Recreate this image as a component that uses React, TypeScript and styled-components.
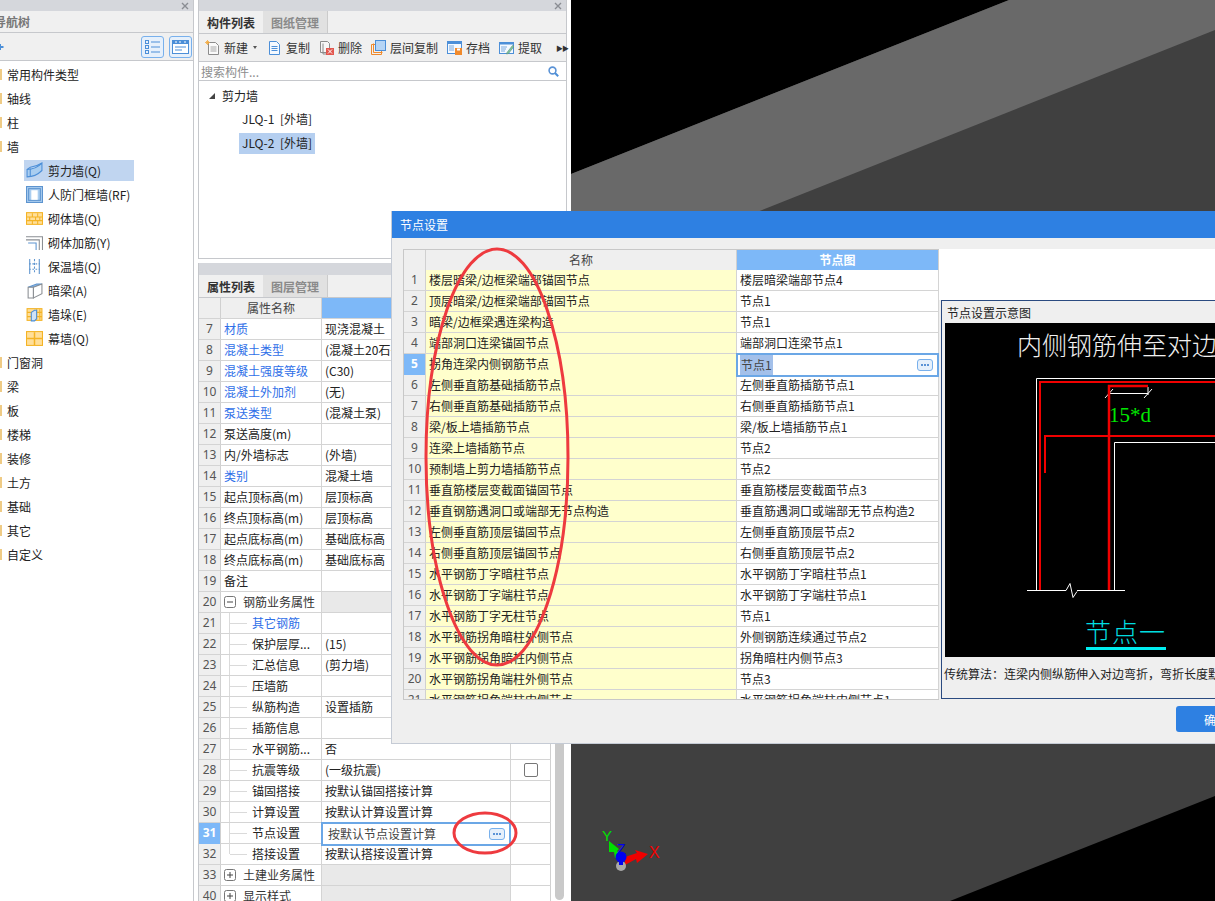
import React from "react";
import styled, { createGlobalStyle } from "styled-components";

const CJK = `"Noto Sans CJK SC", "Noto Sans", sans-serif`;

const GlobalStyle = createGlobalStyle`
  html, body { margin: 0; padding: 0; background: #fff; }
  body { font-family: ${CJK}; font-size: 12px; color: #222; }
  * { box-sizing: border-box; }
`;

const Page = styled.div`
  position: relative;
  display: flex;
  width: 1215px;
  height: 901px;
  overflow: hidden;
  background: #fff;
`;

/* ---------- shared panel parts ---------- */
const TitleStrip = styled.div<{ $h: number }>`
  height: ${(p) => p.$h}px;
  flex: none;
  background: #d5d7dc;
  display: flex;
  align-items: center;
  justify-content: flex-end;
  padding-right: 4px;
`;
const CloseGlyph = () => (
  <svg width="8" height="8" viewBox="0 0 8 8">
    <path d="M1 1l6 6M7 1L1 7" stroke="#8a8d93" strokeWidth="1.4" />
  </svg>
);
const TabStrip = styled.div<{ $h: number }>`
  height: ${(p) => p.$h}px;
  flex: none;
  display: flex;
  background: #f0f0f0;
  border-bottom: 1px solid #c6c8cc;
`;
const Tab = styled.div<{ $active?: boolean }>`
  width: ${(p) => (p.$active ? 64 : 65)}px;
  display: flex;
  align-items: center;
  justify-content: center;
  font-weight: 700;
  color: ${(p) => (p.$active ? "#333" : "#8a8a8a")};
  background: ${(p) => (p.$active ? "#f0f0f0" : "#e1e1e1")};
  border-right: ${(p) => (p.$active ? "none" : "1px solid #cbcbcb")};
`;

/* ---------- left panel ---------- */
const LeftPanel = styled.aside`
  width: 194px;
  flex: none;
  display: flex;
  flex-direction: column;
  border-right: 1px solid #c6c8cc;
`;
const LeftTitle = styled.div`
  height: 22px;
  flex: none;
  display: flex;
  align-items: center;
  background: #f0f0f0;
  border-bottom: 1px solid #c6c8cc;
  color: #777;
  font-weight: 700;
`;
const ClippedLabel = styled.span`
  margin-left: -6px;
`;
const LeftToolbar = styled.div`
  height: 28px;
  flex: none;
  display: flex;
  align-items: center;
  justify-content: space-between;
  padding-right: 1px;
  background: #f0f0f0;
  border-bottom: 1px solid #c6c8cc;
`;
const ViewButtons = styled.div`
  display: flex;
  gap: 5px;
`;
const ViewButton = styled.div`
  width: 23px;
  height: 22px;
  display: flex;
  align-items: center;
  justify-content: center;
  border: 1px solid #78b0ec;
  border-radius: 3px;
  background: #e6f0fb;
`;
const Tree = styled.div`
  padding-top: 1px;
  display: flex;
  flex-direction: column;
`;
const TreeRow = styled.div`
  height: 24px;
  display: flex;
  align-items: center;
  color: #222;
`;
const FolderStub = styled.span`
  width: 2px;
  height: 11px;
  margin-right: 5px;
  background: #efcb85;
`;
const TreeChild = styled.div`
  height: 24px;
  display: flex;
  align-items: center;
  padding-left: 24px;
`;
const ChildInner = styled.div<{ $selected?: boolean }>`
  width: 110px;
  height: 21px;
  padding-left: 2px;
  display: flex;
  align-items: center;
  gap: 5px;
  white-space: nowrap;
  background: ${(p) => (p.$selected ? "#c0d5f0" : "transparent")};
`;

/* ---------- centre column ---------- */
const Centre = styled.div`
  width: 369px;
  flex: none;
  margin: 0 4px;
  display: flex;
  flex-direction: column;
  gap: 4px;
`;
const TopPanel = styled.section`
  height: 259px;
  flex: none;
  display: flex;
  flex-direction: column;
  border: 1px solid #c6c8cc;
  border-top: none;
`;
const Toolbar = styled.div`
  height: 28px;
  flex: none;
  display: flex;
  align-items: center;
  padding-left: 6px;
  gap: 9px;
  background: #f0f0f0;
  border-bottom: 1px solid #c6c8cc;
`;
const ToolItem = styled.div`
  display: flex;
  align-items: center;
  gap: 4px;
  white-space: nowrap;
  color: #333;
`;
const Caret = styled.span`
  width: 0;
  height: 0;
  margin: 0 1px;
  border-left: 2.5px solid transparent;
  border-right: 2.5px solid transparent;
  border-top: 3px solid #555;
`;
const MoreGlyph = styled.span`
  margin-left: 5px;
  font-size: 7px;
  letter-spacing: -1px;
  color: #333;
`;
const SearchBar = styled.div`
  height: 19px;
  flex: none;
  display: flex;
  align-items: center;
  justify-content: space-between;
  padding: 0 7px 0 2px;
  color: #8d8d8d;
  border-bottom: 1px solid #c6c8cc;
`;
const ComponentList = styled.div`
  padding-top: 3px;
  display: flex;
  flex-direction: column;
`;
const ComponentHead = styled.div`
  height: 23px;
  display: flex;
  align-items: center;
  padding-left: 10px;
  gap: 7px;
`;
const ComponentRow = styled.div`
  height: 24px;
  padding-left: 40px;
  display: flex;
  align-items: center;
`;
const ComponentLabel = styled.span<{ $selected?: boolean }>`
  height: 21px;
  line-height: 20px;
  padding: 0 3px;
  word-spacing: 3px;
  background: ${(p) => (p.$selected ? "#b5cff0" : "transparent")};
`;

const BottomPanel = styled.section`
  flex: 1;
  min-height: 0;
  display: flex;
  flex-direction: column;
  border-left: 1px solid #c6c8cc;
`;
const PropBody = styled.div`
  flex: 1;
  min-height: 0;
  display: flex;
  overflow: hidden;
`;
const PropTable = styled.div`
  width: 352px;
  flex: none;
  display: flex;
  flex-direction: column;
`;
const PropGridRow = styled.div<{ $h?: number }>`
  flex: none;
  height: ${(p) => p.$h ?? 21}px;
  display: grid;
  grid-template-columns: 22px 101px 189px 40px;
  border-bottom: 1px solid #d4d4d4;
  line-height: 20px;
  white-space: nowrap;
`;
const NumCell = styled.div<{ $active?: boolean }>`
  text-align: center;
  font-family: "Noto Sans", sans-serif;
  font-size: 12px;
  font-weight: ${(p) => (p.$active ? 700 : 400)};
  color: ${(p) => (p.$active ? "#fff" : "#555")};
  background: ${(p) => (p.$active ? "#7db8f8" : "#efefef")};
  border-right: 1px solid #d0d0d0;
`;
const HeadCell = styled.div<{ $blue?: boolean }>`
  text-align: center;
  color: #444;
  background: ${(p) => (p.$blue ? "#7db8f8" : "#efefef")};
  border-right: 1px solid #d0d0d0;
`;
const NameCell = styled.div<{ $blue?: boolean; $sub?: boolean; $last?: boolean }>`
  position: relative;
  padding-left: ${(p) => (p.$sub ? 31 : 3)}px;
  color: ${(p) => (p.$blue ? "#2f6fe8" : "#222")};
  border-right: 1px solid #d4d4d4;
  overflow: hidden;

  ${(p) =>
    p.$sub
      ? `
    &::before {
      content: "";
      position: absolute;
      left: 8px;
      top: 0;
      width: 1px;
      height: ${p.$last ? "10px" : "21px"};
      background: #dadada;
    }
    &::after {
      content: "";
      position: absolute;
      left: 9px;
      top: 10px;
      width: 17px;
      height: 1px;
      background: #dadada;
    }
  `
      : ""}
`;
const GroupName = styled.div`
  display: flex;
  align-items: center;
  gap: 7px;
  padding-left: 3px;
  color: #333;
  border-right: 1px solid #d4d4d4;
`;
const ValueCell = styled.div<{ $group?: boolean }>`
  padding-left: 3px;
  background: ${(p) => (p.$group ? "#e9e9e9" : "#fff")};
  border-right: 1px solid #d4d4d4;
  overflow: hidden;
`;
const EditCell = styled.div<{ $pad: number }>`
  position: relative;
  display: flex;
  align-items: center;
  justify-content: space-between;
  padding: 0 4px 0 ${(p) => p.$pad}px;
  border: 2px solid #6ba7e6;
  margin: -1px 0 -1px -1px;
  background: #fff;
  color: #444;
  z-index: 1;
`;
const DotsButton = styled.span`
  width: 16px;
  height: 12px;
  border: 1px solid #78b0ec;
  border-radius: 3px;
  background: #e6f0fb;
  display: flex;
  align-items: center;
  justify-content: center;
  gap: 1px;
  flex: none;
`;
const Dot = styled.i`
  width: 2px;
  height: 2px;
  background: #5b93d6;
`;
const ExtraCell = styled.div`
  display: flex;
  align-items: center;
  justify-content: center;
  border-right: 1px solid #d0d0d0;
`;
const CheckBox = styled.span`
  width: 14px;
  height: 14px;
  border: 1px solid #777;
  border-radius: 2px;
  background: #fff;
`;
const ScrollTrack = styled.div`
  width: 15px;
  flex: none;
  padding: 10px 2px 1px 4px;
`;
const ScrollThumb = styled.div`
  height: 100%;
  background: #c9c9c9;
  border-radius: 5px;
`;

/* ---------- 3d canvas ---------- */
const CanvasArea = styled.main`
  flex: 1;
  min-width: 0;
  background: #404040;
  display: flex;
`;

/* ---------- dialog ---------- */
const Dialog = styled.div`
  position: absolute;
  left: 391px;
  top: 211px;
  width: 870px;
  height: 533px;
  display: flex;
  flex-direction: column;
  background: #efefef;
  border: 1px solid #c5cbd5;
  border-top: none;
`;
const DialogTitle = styled.div`
  height: 27px;
  flex: none;
  display: flex;
  align-items: center;
  padding-left: 8px;
  background: #2e80e2;
  color: #fff;
`;
const DialogBody = styled.div`
  display: flex;
  height: 450px;
  flex: none;
  margin: 11px 0 0 11px;
`;
const NodeTable = styled.div`
  width: 536px;
  height: 451px;
  flex: none;
  overflow: hidden;
  border-top: 1px solid #c8c8c8;
  border-left: 1px solid #c8c8c8;
  border-bottom: 1px solid #c8c8c8;
  background: #fff;
`;
const NodeRow = styled.div<{ $head?: boolean }>`
  height: ${(p) => (p.$head ? 20 : 21)}px;
  display: grid;
  grid-template-columns: 22px 311px 202px;
  border-bottom: 1px solid #d4d4d4;
  line-height: 20px;
  white-space: nowrap;
`;
const NodeName = styled.div`
  padding-left: 3px;
  background: #ffffcc;
  color: #222;
  border-right: 1px solid #d4d4d4;
`;
const NodeValue = styled.div`
  padding-left: 3px;
  color: #222;
  border-right: 1px solid #d4d4d4;
  overflow: hidden;
`;
const Highlighted = styled.span`
  background: #a3c0ea;
  padding: 0 1px;
`;
const RightColumn = styled.div`
  flex: 1;
  min-width: 0;
  display: flex;
  flex-direction: column;
`;
const WhiteSpacer = styled.div`
  height: 51px;
  flex: none;
  background: #fff;
`;
const SchematicPanel = styled.div`
  flex: 1;
  margin-left: 2px;
  display: flex;
  flex-direction: column;
  border: 1px solid #2a4a80;
  border-right: none;
  background: #efefef;
  overflow: hidden;
  min-height: 0;
`;
const SchematicTitle = styled.div`
  height: 22px;
  flex: none;
  padding-left: 5px;
  line-height: 24px;
  color: #222;
`;
const SchematicView = styled.div`
  height: 334px;
  flex: none;
  margin-left: 3px;
  background: #000;
  overflow: hidden;
`;
const SchematicDrawing = styled.svg`
  display: block;
  width: 400px;
  height: 334px;
`;
const SchematicNote = styled.div`
  padding: 8px 0 0 2px;
  white-space: nowrap;
  color: #222;
`;
const DialogFooter = styled.div`
  flex: 1;
  display: flex;
  justify-content: flex-end;
  align-items: flex-start;
  padding: 7px 4px 0 0;
`;
const PrimaryButton = styled.button`
  width: 80px;
  height: 26px;
  border: none;
  border-radius: 3px;
  background: #2e80e2;
  color: #fff;
  font-family: ${CJK};
  font-size: 12px;
  padding: 0;
`;

const AnnotationLayer = styled.svg<{ $z: number }>`
  position: absolute;
  left: 0;
  top: 0;
  z-index: ${(p) => p.$z};
  pointer-events: none;
`;

/* ---------- icons ---------- */
type IconKind = "shear" | "frame" | "brick" | "rebar" | "insul" | "beam" | "pier" | "curtain";

const TreeIcon = ({ kind }: { kind: IconKind }) => (
  <svg width="17" height="17" viewBox="0 0 16 16" style={{ flex: "none" }}>
    {kind === "shear" && (
      <g>
        <path d="M1 7C6 7 11 5 15 1v7c-4 4-9 6-14 6z" fill="#a9cdf0" stroke="#4c8fd8" />
        <path d="M1 7l3-2c4-.5 8-2 11-4" fill="none" stroke="#4c8fd8" />
        <path d="M4 6v7.5" stroke="#4c8fd8" />
      </g>
    )}
    {kind === "frame" && (
      <g>
        <rect x="0.5" y="0.5" width="15" height="15" fill="#a9cdf0" stroke="#5d94cf" />
        <rect x="2.5" y="2.5" width="11" height="11" fill="#a9cdf0" stroke="#5d94cf" />
        <rect x="5" y="4" width="6" height="9" fill="#fff" />
      </g>
    )}
    {kind === "brick" && (
      <g>
        <rect x="0.5" y="2.5" width="15" height="11" fill="#ffdf9a" stroke="#f4b324" />
        <path d="M1 6.5h14M1 10h14M6 3v3.5M11 3v3.5M3.5 6.5V10M9 6.5V10M13 6.5V10M6 10v3.5M11 10v3.5" stroke="#f4b324" />
      </g>
    )}
    {kind === "rebar" && (
      <g fill="none" stroke="#8b8f94">
        <path d="M0 2.5h15.5V15" />
        <path d="M0 5.5h12.5V15" />
        <path d="M2 8.5h7.5V15" stroke="#5d94cf" />
      </g>
    )}
    {kind === "insul" && (
      <g stroke="#5d94cf" fill="none">
        <path d="M3.5 1v14M12.5 1v14" />
        <path d="M8 1v14" strokeDasharray="2 1.5" />
        <path d="M3 5.5h10M3 10.5h10" strokeDasharray="1.5 1.5" />
      </g>
    )}
    {kind === "beam" && (
      <g stroke="#8b8f94">
        <path d="M2 5l8-3h5L7 5z" fill="#8db8e4" stroke="#5d94cf" />
        <path d="M2 5h5v10H2z" fill="#fff" />
        <path d="M7 5l8-3v9l-8 4z" fill="#fff" />
      </g>
    )}
    {kind === "pier" && (
      <g>
        <rect x="1" y="2.5" width="14" height="11" fill="#ffdf9a" stroke="#f4b324" />
        <path d="M1 6h14M1 10h14M10 3v10M13 3v10" stroke="#f4b324" />
        <path d="M5 6l3-2h2v8l-2 2H5z" fill="#cfe2f6" stroke="#4c8fd8" />
      </g>
    )}
    {kind === "curtain" && (
      <g>
        <rect x="0.5" y="1.5" width="15" height="13" fill="#ffdf9a" stroke="#f4b324" />
        <path d="M1 8h14M8 2v12" stroke="#f4b324" strokeWidth="1.4" />
      </g>
    )}
  </svg>
);

const ToolIcon = ({ kind }: { kind: string }) => (
  <svg width="15" height="15" viewBox="0 0 15 15" style={{ flex: "none" }}>
    {kind === "new" && (
      <g>
        <path d="M3.5 2.5h7l3 3v9h-10z" fill="#fafafa" stroke="#8c8c8c" />
        <path d="M5.5 7h6M5.5 9h6M5.5 11h6" stroke="#a8a8a8" />
        <path d="M2.5 0v5M0 2.5h5M1 1l3 3M4 1L1 4" stroke="#f4a83a" strokeWidth="0.8" />
      </g>
    )}
    {kind === "copy" && (
      <g>
        <path d="M2.5 1.5h7l3 3v10h-10z" fill="#f4f9ff" stroke="#4c8fd8" />
        <path d="M4.5 6.5h6M4.5 8.5h6M4.5 10.5h6" stroke="#4c8fd8" />
      </g>
    )}
    {kind === "del" && (
      <g>
        <path d="M1.5 1.5h7l2 2v9h-9z" fill="#f7f7f7" stroke="#8c8c8c" />
        <path d="M4 3.5v10.5h3" fill="none" stroke="#8c8c8c" />
        <rect x="7" y="8" width="8" height="7" fill="#e2574f" />
        <path d="M9 9.5l4 4M13 9.5l-4 4" stroke="#fff" />
      </g>
    )}
    {kind === "floor" && (
      <g>
        <path d="M4.5 4.5H.5v10h10v-4" fill="none" stroke="#f08a2c" />
        <path d="M2.5 3.5v9h9" fill="none" stroke="#f08a2c" />
        <rect x="4.5" y="0.5" width="10" height="10" fill="#b5d4f5" stroke="#4c8fd8" />
      </g>
    )}
    {kind === "save" && (
      <g>
        <rect x="0.5" y="1.5" width="14" height="12" fill="#f4f9ff" stroke="#4c8fd8" />
        <rect x="0" y="1" width="15" height="3" fill="#4c8fd8" />
        <path d="M2 6h5M2 8h5M2 10h5" stroke="#7aa9dd" />
        <rect x="8" y="8" width="7" height="7" fill="#f08a2c" />
        <rect x="10" y="8.5" width="3" height="2" fill="#fff" />
      </g>
    )}
    {kind === "pick" && (
      <g>
        <rect x="0.5" y="2.5" width="14" height="11" fill="#f4f9ff" stroke="#4c8fd8" />
        <rect x="0" y="2" width="15" height="2.5" fill="#4c8fd8" />
        <path d="M2 7h6M2 9h5M2 11h4" stroke="#7aa9dd" />
        <path d="M8 12.5l5.5-7 1.5 1-5.5 7-2 .5z" fill="#7ec4a0" stroke="#5b8f74" strokeWidth="0.6" />
      </g>
    )}
  </svg>
);

const SearchIcon = () => (
  <svg width="11" height="11" viewBox="0 0 11 11">
    <circle cx="4.5" cy="4.5" r="3.4" fill="none" stroke="#5b93d6" strokeWidth="1.6" />
    <path d="M7 7l3.2 3.2" stroke="#4c8fd8" strokeWidth="2" />
  </svg>
);

const BoxGlyph = ({ open }: { open: boolean }) => (
  <svg width="12" height="12" viewBox="0 0 12 12" style={{ flex: "none" }}>
    <rect x="0.5" y="0.5" width="11" height="11" rx="2" fill="#fff" stroke="#777" />
    <path d="M3 6h6" stroke="#444" />
    {!open && <path d="M6 3v6" stroke="#444" />}
  </svg>
);

/* ---------- data ---------- */
const topNodes = ["常用构件类型", "轴线", "柱", "墙"];
const wallChildren: [string, IconKind][] = [
  ["剪力墙(Q)", "shear"],
  ["人防门框墙(RF)", "frame"],
  ["砌体墙(Q)", "brick"],
  ["砌体加筋(Y)", "rebar"],
  ["保温墙(Q)", "insul"],
  ["暗梁(A)", "beam"],
  ["墙垛(E)", "pier"],
  ["幕墙(Q)", "curtain"],
];
const bottomNodes = ["门窗洞", "梁", "板", "楼梯", "装修", "土方", "基础", "其它", "自定义"];

const tools: [string, string][] = [
  ["copy", "复制"],
  ["del", "删除"],
  ["floor", "层间复制"],
  ["save", "存档"],
  ["pick", "提取"],
];

type Prop = { n: number; name: string; value?: string; blue?: boolean; sub?: boolean; check?: boolean };
const upperProps: Prop[] = [
  { n: 7, name: "材质", value: "现浇混凝土", blue: true },
  { n: 8, name: "混凝土类型", value: "(混凝土20石子)", blue: true },
  { n: 9, name: "混凝土强度等级", value: "(C30)", blue: true },
  { n: 10, name: "混凝土外加剂", value: "(无)", blue: true },
  { n: 11, name: "泵送类型", value: "(混凝土泵)", blue: true },
  { n: 12, name: "泵送高度(m)" },
  { n: 13, name: "内/外墙标志", value: "(外墙)" },
  { n: 14, name: "类别", value: "混凝土墙", blue: true },
  { n: 15, name: "起点顶标高(m)", value: "层顶标高" },
  { n: 16, name: "终点顶标高(m)", value: "层顶标高" },
  { n: 17, name: "起点底标高(m)", value: "基础底标高" },
  { n: 18, name: "终点底标高(m)", value: "基础底标高" },
  { n: 19, name: "备注" },
];
const rebarProps: Prop[] = [
  { n: 21, name: "其它钢筋", blue: true, sub: true },
  { n: 22, name: "保护层厚...", value: "(15)", sub: true },
  { n: 23, name: "汇总信息", value: "(剪力墙)", sub: true },
  { n: 24, name: "压墙筋", sub: true },
  { n: 25, name: "纵筋构造", value: "设置插筋", sub: true },
  { n: 26, name: "插筋信息", sub: true },
  { n: 27, name: "水平钢筋...", value: "否", sub: true },
  { n: 28, name: "抗震等级", value: "(一级抗震)", sub: true, check: true },
  { n: 29, name: "锚固搭接", value: "按默认锚固搭接计算", sub: true },
  { n: 30, name: "计算设置", value: "按默认计算设置计算", sub: true },
];

const nodes: [string, string][] = [
  ["楼层暗梁/边框梁端部锚固节点", "楼层暗梁端部节点4"],
  ["顶层暗梁/边框梁端部锚固节点", "节点1"],
  ["暗梁/边框梁遇连梁构造", "节点1"],
  ["端部洞口连梁锚固节点", "端部洞口连梁节点1"],
  ["拐角连梁内侧钢筋节点", "节点1"],
  ["左侧垂直筋基础插筋节点", "左侧垂直筋插筋节点1"],
  ["右侧垂直筋基础插筋节点", "右侧垂直筋插筋节点1"],
  ["梁/板上墙插筋节点", "梁/板上墙插筋节点1"],
  ["连梁上墙插筋节点", "节点2"],
  ["预制墙上剪力墙插筋节点", "节点2"],
  ["垂直筋楼层变截面锚固节点", "垂直筋楼层变截面节点3"],
  ["垂直钢筋遇洞口或端部无节点构造", "垂直筋遇洞口或端部无节点构造2"],
  ["左侧垂直筋顶层锚固节点", "左侧垂直筋顶层节点2"],
  ["右侧垂直筋顶层锚固节点", "右侧垂直筋顶层节点2"],
  ["水平钢筋丁字暗柱节点", "水平钢筋丁字暗柱节点1"],
  ["水平钢筋丁字端柱节点", "水平钢筋丁字端柱节点1"],
  ["水平钢筋丁字无柱节点", "节点1"],
  ["水平钢筋拐角暗柱外侧节点", "外侧钢筋连续通过节点2"],
  ["水平钢筋拐角暗柱内侧节点", "拐角暗柱内侧节点3"],
  ["水平钢筋拐角端柱外侧节点", "节点3"],
  ["水平钢筋拐角端柱内侧节点", "水平钢筋拐角端柱内侧节点1"],
];

const Dots = () => (
  <DotsButton>
    <Dot />
    <Dot />
    <Dot />
  </DotsButton>
);

const PropLine = ({ p, last }: { p: Prop; last?: boolean }) => (
  <PropGridRow>
    <NumCell>{p.n}</NumCell>
    <NameCell $blue={p.blue} $sub={p.sub} $last={last}>
      {p.name}
    </NameCell>
    <ValueCell>{p.value}</ValueCell>
    <ExtraCell>{p.check && <CheckBox />}</ExtraCell>
  </PropGridRow>
);

const NodeHeadCell = styled(HeadCell)`
  color: #fff;
  font-weight: 700;
`;
const DialogLayer = styled(Dialog)`
  z-index: 2;
`;

export default function App() {
  return (
    <Page>
      <GlobalStyle />

      <LeftPanel>
        <TitleStrip $h={11}>
          <CloseGlyph />
        </TitleStrip>
        <LeftTitle>
          <ClippedLabel>导航树</ClippedLabel>
        </LeftTitle>
        <LeftToolbar>
          <svg width="4" height="8" viewBox="0 0 4 8">
            <path d="M0 4h3.5M0 1v6" stroke="#4c8fd8" strokeWidth="2" />
          </svg>
          <ViewButtons>
            <ViewButton>
              <svg width="15" height="14" viewBox="0 0 15 14">
                <g fill="none" stroke="#4c8fd8">
                  <rect x="0.5" y="0.5" width="3" height="3" />
                  <rect x="0.5" y="5.5" width="3" height="3" />
                  <rect x="0.5" y="10.5" width="3" height="3" />
                  <path d="M6 2h9M6 7h9M6 12h9" />
                </g>
              </svg>
            </ViewButton>
            <ViewButton>
              <svg width="17" height="14" viewBox="0 0 17 14">
                <rect x="0.5" y="0.5" width="16" height="13" fill="#fff" stroke="#4c8fd8" />
                <rect x="0" y="0" width="17" height="4" fill="#4c8fd8" />
                <path d="M3 2h2M7 2h2M12 2h2" stroke="#fff" />
                <path d="M3 7h11M3 10h7" stroke="#4c8fd8" />
              </svg>
            </ViewButton>
          </ViewButtons>
        </LeftToolbar>
        <Tree>
          {topNodes.map((t) => (
            <TreeRow key={t}>
              <FolderStub />
              {t}
            </TreeRow>
          ))}
          {wallChildren.map(([t, k], i) => (
            <TreeChild key={t}>
              <ChildInner $selected={i === 0}>
                <TreeIcon kind={k} />
                {t}
              </ChildInner>
            </TreeChild>
          ))}
          {bottomNodes.map((t) => (
            <TreeRow key={t}>
              <FolderStub />
              {t}
            </TreeRow>
          ))}
        </Tree>
      </LeftPanel>

      <Centre>
        <TopPanel>
          <TitleStrip $h={11}>
            <CloseGlyph />
          </TitleStrip>
          <TabStrip $h={23}>
            <Tab $active>构件列表</Tab>
            <Tab>图纸管理</Tab>
          </TabStrip>
          <Toolbar>
            <ToolItem>
              <ToolIcon kind="new" />
              新建
              <Caret />
            </ToolItem>
            {tools.map(([k, t]) => (
              <ToolItem key={k}>
                <ToolIcon kind={k} />
                {t}
              </ToolItem>
            ))}
            <MoreGlyph>▶▶</MoreGlyph>
          </Toolbar>
          <SearchBar>
            搜索构件...
            <SearchIcon />
          </SearchBar>
          <ComponentList>
            <ComponentHead>
              <svg width="6" height="6" viewBox="0 0 6 6">
                <path d="M6 0v6H0z" fill="#444" />
              </svg>
              剪力墙
            </ComponentHead>
            <ComponentRow>
              <ComponentLabel>JLQ-1 [外墙]</ComponentLabel>
            </ComponentRow>
            <ComponentRow>
              <ComponentLabel $selected>JLQ-2 [外墙]</ComponentLabel>
            </ComponentRow>
          </ComponentList>
        </TopPanel>

        <BottomPanel>
          <TitleStrip $h={12} />
          <TabStrip $h={23}>
            <Tab $active>属性列表</Tab>
            <Tab>图层管理</Tab>
          </TabStrip>
          <PropBody>
            <PropTable>
              <PropGridRow>
                <HeadCell />
                <HeadCell>属性名称</HeadCell>
                <HeadCell $blue />
                <HeadCell />
              </PropGridRow>
              {upperProps.map((p) => (
                <PropLine key={p.n} p={p} />
              ))}
              <PropGridRow>
                <NumCell>20</NumCell>
                <GroupName>
                  <BoxGlyph open />
                  钢筋业务属性
                </GroupName>
                <ValueCell $group />
                <ExtraCell />
              </PropGridRow>
              {rebarProps.map((p) => (
                <PropLine key={p.n} p={p} />
              ))}
              <PropGridRow>
                <NumCell $active>31</NumCell>
                <NameCell $sub>节点设置</NameCell>
                <EditCell $pad={5}>
                  按默认节点设置计算
                  <Dots />
                </EditCell>
                <ExtraCell />
              </PropGridRow>
              <PropLine
                p={{ n: 32, name: "搭接设置", value: "按默认搭接设置计算", sub: true }}
                last
              />
              <PropGridRow>
                <NumCell>33</NumCell>
                <GroupName>
                  <BoxGlyph open={false} />
                  土建业务属性
                </GroupName>
                <ValueCell $group />
                <ExtraCell />
              </PropGridRow>
              <PropGridRow>
                <NumCell>40</NumCell>
                <GroupName>
                  <BoxGlyph open={false} />
                  显示样式
                </GroupName>
                <ValueCell $group />
                <ExtraCell />
              </PropGridRow>
            </PropTable>
            <ScrollTrack>
              <ScrollThumb />
            </ScrollTrack>
          </PropBody>
        </BottomPanel>
      </Centre>

      <CanvasArea>
        <svg width="644" height="901" viewBox="571 0 644 901">
          <polygon points="571,0 1009,0 571,174" fill="#000" />
          <polygon points="1009,0 1215,0 1215,30 571,286 571,174" fill="#696969" />
          <polygon points="950,901 1215,796 1215,901" fill="#000" />
          <polygon points="609,841 619,849 617,851 622,856 615,858 614,852 609,852" fill="#00e000" />
          <polygon points="625,857 637,853 635,850 648,854 637,863 636,859 625,865" fill="#f00000" />
          <circle cx="621" cy="866" r="5" fill="#a8a8a8" />
          <circle cx="621" cy="857" r="5.5" fill="#0000f0" />
          <rect x="619" y="860" width="4" height="5" fill="#0000f0" />
          <text x="602" y="841" fontFamily="Liberation Sans" fontSize="15" fill="#00e000">Y</text>
          <text x="617" y="854" fontFamily="Liberation Sans" fontSize="14" fill="#0000f0">Z</text>
          <text x="649" y="858" fontFamily="Liberation Sans" fontSize="16" fill="#f00000">X</text>
        </svg>
      </CanvasArea>

      <AnnotationLayer $z={1} width="1215" height="901" viewBox="0 0 1215 901">
        <ellipse cx="485" cy="833" rx="31" ry="20" fill="none" stroke="#ee3a3f" strokeWidth="3" />
      </AnnotationLayer>

      <DialogLayer>
        <DialogTitle>节点设置</DialogTitle>
        <DialogBody>
          <NodeTable>
            <NodeRow $head>
              <HeadCell />
              <HeadCell>名称</HeadCell>
              <NodeHeadCell $blue>节点图</NodeHeadCell>
            </NodeRow>
            {nodes.map(([name, val], i) => (
              <NodeRow key={i}>
                <NumCell $active={i === 4}>{i + 1}</NumCell>
                <NodeName>{name}</NodeName>
                {i === 4 ? (
                  <EditCell $pad={2}>
                    <Highlighted>{val}</Highlighted>
                    <Dots />
                  </EditCell>
                ) : (
                  <NodeValue>{val}</NodeValue>
                )}
              </NodeRow>
            ))}
          </NodeTable>
          <RightColumn>
            <WhiteSpacer />
            <SchematicPanel>
              <SchematicTitle>节点设置示意图</SchematicTitle>
              <SchematicView>
                <SchematicDrawing viewBox="945 323 400 334">
                  <text x="1017" y="355" fontFamily={CJK} fontWeight="300" fontSize="25" fill="#f0f0f0">
                    内侧钢筋伸至对边
                  </text>
                  <g fill="none" stroke="#fff" strokeWidth="1">
                    <path d="M1036.5 590V378.5H1300" />
                    <path d="M1114.5 590V442.5H1300" />
                    <path d="M1027 590.5h39l4-7 3 14 4-6M1077 590.5h48" />
                    <path d="M1109 393.5h39M1105 398l8-9M1144 398l8-9M1148 387v8" />
                  </g>
                  <g fill="none" stroke="#f00000" strokeWidth="2">
                    <path d="M1040 590V382H1300" />
                    <path d="M1109 590V386H1148" strokeWidth="2.5" />
                    <path d="M1045 473V436H1300" />
                  </g>
                  <text x="1109" y="422" fontFamily="Liberation Serif" fontSize="21" fill="#00e800">
                    15*d
                  </text>
                  <text x="1085" y="642" fontFamily={CJK} fontWeight="300" fontSize="26" letterSpacing="1" fill="#00dde0">
                    节点一
                  </text>
                  <rect x="1086" y="647" width="80" height="3" fill="#00eef0" />
                </SchematicDrawing>
              </SchematicView>
              <SchematicNote>传统算法：连梁内侧纵筋伸入对边弯折，弯折长度默认为15d</SchematicNote>
            </SchematicPanel>
          </RightColumn>
        </DialogBody>
        <DialogFooter>
          <PrimaryButton>确定</PrimaryButton>
        </DialogFooter>
      </DialogLayer>

      <AnnotationLayer $z={3} width="1215" height="901" viewBox="0 0 1215 901">
        <ellipse cx="497" cy="457" rx="71" ry="208" fill="none" stroke="#ee3a3f" strokeWidth="3" />
      </AnnotationLayer>
    </Page>
  );
}
